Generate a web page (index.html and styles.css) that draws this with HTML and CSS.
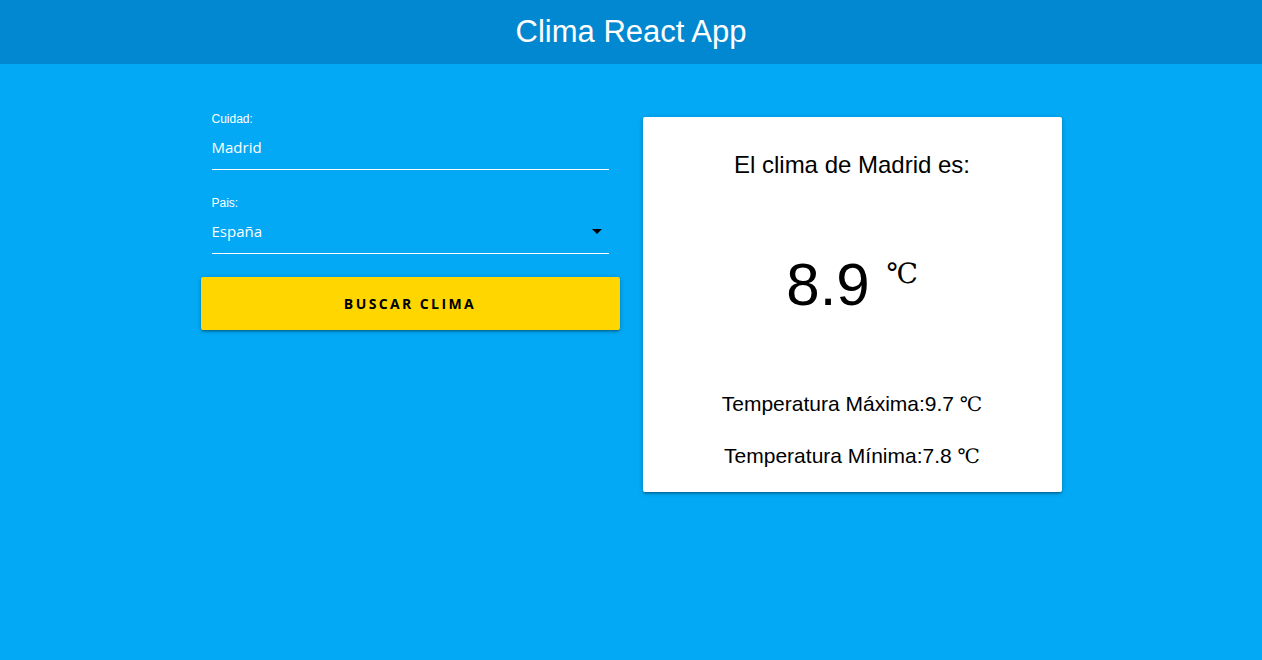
FILE: index.html
```html
<!DOCTYPE html>
<html lang="es">
<head>
<meta charset="utf-8">
<title>Clima React App</title>
<link rel="stylesheet" href="styles.css">
</head>
<body>
<header class="topbar">
  <h1 class="brand">Clima React App</h1>
</header>
<main class="container">
  <section class="col-form">
    <form class="form">
      <div class="field">
        <label class="label">Cuidad:</label>
        <div class="input">Madrid</div>
      </div>
      <div class="field">
        <label class="label">Pais:</label>
        <div class="input select">
          <span>España</span>
          <svg class="caret" width="10" height="5" viewBox="0 0 10 5"><path d="M0 0h10L5 5z" fill="#000"/></svg>
        </div>
      </div>
      <button type="button" class="btn">BUSCAR CLIMA</button>
    </form>
  </section>
  <section class="col-card">
    <div class="card">
      <h2 class="card-title">El clima de Madrid es:</h2>
      <p class="temp">8.9 <span class="deg-big">℃</span></p>
      <p class="minmax">Temperatura Máxima:9.7 <span class="deg">℃</span></p>
      <p class="minmax second">Temperatura Mínima:7.8 <span class="deg">℃</span></p>
    </div>
  </section>
</main>
</body>
</html>
```

FILE: styles.css
```css
html, body {
  margin: 0;
  padding: 0;
  height: 100%;
}
body {
  background: #03a9f4;
  font-family: "Liberation Sans", Arial, sans-serif;
}
.topbar {
  height: 64px;
  background: #0288d1;
  display: flex;
  align-items: center;
  justify-content: center;
}
.brand {
  margin: 0;
  font-weight: normal;
  color: #fff;
  font-size: 31px;
  line-height: 64px;
}
.container {
  width: 861px;
  margin: 0 auto;
  padding-top: 48px;
  display: flex;
  justify-content: space-between;
  align-items: flex-start;
}
.col-form {
  width: 419px;
}
.form {
  display: flex;
  flex-direction: column;
}
.field {
  margin: 0 11px;
}
.field + .field {
  margin-top: 26px;
}
.label {
  display: block;
  color: #fff;
  font-size: 12px;
  line-height: 14px;
}
.input {
  margin-top: 10px;
  line-height: 22px;
  color: #fff;
  font-family: "Open Sans", sans-serif;
  font-size: 15px;
  border-bottom: 1px solid #fff;
  box-sizing: border-box;
  height: 34px;
}
.select {
  display: flex;
  justify-content: space-between;
  align-items: flex-start;
}
.caret {
  margin-top: 9px;
  margin-right: 7px;
}
.btn {
  margin-top: 23px;
  height: 53px;
  border: none;
  border-radius: 2px;
  background: #ffd600;
  color: #000;
  font-family: "Open Sans", sans-serif;
  font-weight: 700;
  font-size: 14px;
  letter-spacing: 2.4px;
  box-shadow: 0 2px 2px 0 rgba(0,0,0,0.14), 0 3px 1px -2px rgba(0,0,0,0.12), 0 1px 5px 0 rgba(0,0,0,0.2);
  cursor: pointer;
}
.col-card {
  width: 419px;
  margin-top: 5px;
}
.card {
  background: #fff;
  border-radius: 2px;
  text-align: center;
  padding: 33px 0 21px;
  box-shadow: 0 2px 2px 0 rgba(0,0,0,0.14), 0 3px 1px -2px rgba(0,0,0,0.12), 0 1px 5px 0 rgba(0,0,0,0.2);
}
.card-title {
  margin: 0;
  font-weight: normal;
  font-size: 24px;
  line-height: 30px;
  color: #000;
}
.temp {
  margin: 59px 0 0;
  font-size: 60px;
  line-height: 70px;
  color: #000;
}
.deg-big {
  font-family: "Liberation Serif", "DejaVu Serif", serif;
  font-size: 28px;
  vertical-align: 22px;
}
.minmax {
  margin: 69px 0 0;
  font-size: 21px;
  line-height: 30px;
  color: #000;
}
.minmax.second {
  margin-top: 22px;
}
.deg {
  font-family: "Liberation Serif", "DejaVu Serif", serif;
  font-size: 20px;
}
```
